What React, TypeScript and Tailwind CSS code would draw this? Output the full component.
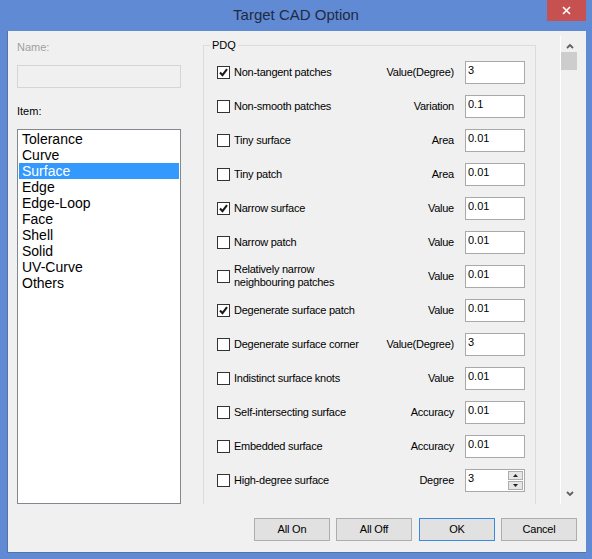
import type { FC } from 'react';

interface Row {
    label: string;
    checked?: boolean;
    unit: string;
    value: string;
    spin?: boolean;
}

const ITEMS = ['Tolerance', 'Curve', 'Surface', 'Edge', 'Edge-Loop', 'Face', 'Shell', 'Solid', 'UV-Curve', 'Others'];

const ROWS: Row[] = [
    { label: 'Non-tangent patches', checked: true, unit: 'Value(Degree)', value: '3' },
    { label: 'Non-smooth patches', unit: 'Variation', value: '0.1' },
    { label: 'Tiny surface', unit: 'Area', value: '0.01' },
    { label: 'Tiny patch', unit: 'Area', value: '0.01' },
    { label: 'Narrow surface', checked: true, unit: 'Value', value: '0.01' },
    { label: 'Narrow patch', unit: 'Value', value: '0.01' },
    { label: 'Relatively narrow\nneighbouring patches', unit: 'Value', value: '0.01' },
    { label: 'Degenerate surface patch', checked: true, unit: 'Value', value: '0.01' },
    { label: 'Degenerate surface corner', unit: 'Value(Degree)', value: '3' },
    { label: 'Indistinct surface knots', unit: 'Value', value: '0.01' },
    { label: 'Self-intersecting surface', unit: 'Accuracy', value: '0.01' },
    { label: 'Embedded surface', unit: 'Accuracy', value: '0.01' },
    { label: 'High-degree surface', unit: 'Degree', value: '3', spin: true },
];

const CheckBox: FC<{ checked?: boolean }> = ({ checked }) => (
    <span className="flex h-[13px] w-[13px] shrink-0 items-center justify-center border border-[#333333] bg-white">
        {checked && (
            <svg width="9" height="9" viewBox="0 0 9 9">
                <path d="M1 4.5 L3.5 7.2 L8 1.2" fill="none" stroke="#1a1a1a" strokeWidth="2.1" />
            </svg>
        )}
    </span>
);

const Button: FC<{ label: string; primary?: boolean }> = ({ label, primary }) => (
    <div
        className={
            'flex h-[23px] w-[76px] items-center justify-center border bg-[#e1e1e1] text-[11px] tracking-[-0.2px] text-black ' +
            (primary ? 'border-[#3c8ae0]' : 'border-[#adadad]')
        }
    >
        {label}
    </div>
);

const OptionRow: FC<{ row: Row }> = ({ row }) => (
    <div className="flex h-[34px] items-center pl-[13px] pr-[10px]">
        <CheckBox checked={row.checked} />
        <span className="ml-[4px] flex-1 whitespace-pre text-[11px] leading-[13px] tracking-[-0.25px]">{row.label}</span>
        <span className="mr-[11px] text-[11px] leading-[13px] tracking-[-0.25px]">{row.unit}</span>
        <div className="relative h-[23px] w-[60px] border border-[#a9a9a9] bg-white px-[2px] pt-px text-[11px] leading-[15px]">
            {row.value}
            {row.spin && (
                <div className="absolute right-[1px] top-[1px] flex flex-col gap-px">
                    <span className="flex h-[9px] w-[15px] items-center justify-center border border-[#adadad] bg-[#e6e6e6]">
                        <svg width="5" height="3" viewBox="0 0 5 3"><path d="M0 3 L2.5 0 L5 3 Z" fill="#222" /></svg>
                    </span>
                    <span className="flex h-[9px] w-[15px] items-center justify-center border border-[#adadad] bg-[#e6e6e6]">
                        <svg width="5" height="3" viewBox="0 0 5 3"><path d="M0 0 L2.5 3 L5 0 Z" fill="#222" /></svg>
                    </span>
                </div>
            )}
        </div>
    </div>
);

export default function App() {
    return (
        <div className="flex h-[559px] w-[592px] flex-col bg-[#618ad4] font-['Liberation_Sans',Arial,sans-serif] text-black">
            <div className="relative flex h-[31px] items-center justify-center">
                <span className="text-[15px] text-[#1f2b40]">Target CAD Option</span>
                <div className="absolute right-[6px] top-0 flex h-[21px] w-[39px] items-center justify-center bg-[#c75050]">
                    <svg width="9" height="9" viewBox="0 0 9 9">
                        <path d="M1 1 L8 8 M8 1 L1 8" stroke="#fff" strokeWidth="1.6" />
                    </svg>
                </div>
            </div>

            <div className="ml-[7px] mr-[6px] flex h-[522px] flex-col border-b border-l border-[#5274ad] bg-[#f0f0f0]">
                <div className="flex h-[473px]">
                    <div className="ml-[9px] flex w-[164px] flex-col">
                        <span className="mt-[10px] text-[11px] leading-[13px] text-[#a0a0a0]">Name:</span>
                        <div className="mt-[11px] h-[23px] border border-[#d5d5d5] bg-[#f0f0f0]" />
                        <span className="mt-[17px] text-[11px] leading-[13px]">Item:</span>
                        <div className="mt-[11px] flex h-[375px] flex-col border border-[#828790] bg-white p-px">
                            {ITEMS.map((item) => (
                                <div
                                    key={item}
                                    className={
                                        'h-[16px] pl-[3px] text-[14px] leading-[16px] ' +
                                        (item === 'Surface' ? 'bg-[#3399ff] text-white' : 'text-black')
                                    }
                                >
                                    {item}
                                </div>
                            ))}
                        </div>
                    </div>

                    <div className="ml-[22px] mt-[5px] h-[468px] w-[333px] overflow-hidden">
                        <div className="relative mt-[9px] border border-[#dcdcdc] pb-[40px] pt-[9px]">
                            <span className="absolute -top-[7px] left-[6px] bg-[#f0f0f0] px-[2px] text-[11px] leading-[13px]">PDQ</span>
                            {ROWS.map((row) => (
                                <OptionRow key={row.label} row={row} />
                            ))}
                        </div>
                    </div>

                    <div className="ml-[24px] mt-[5px] flex h-[468px] w-[18px] flex-col border-l border-white">
                        <div className="flex h-[16px] items-center justify-center pl-[1px] pt-[3px]">
                            <svg width="8" height="6" viewBox="0 0 8 6"><path d="M1 5 L4 2 L7 5" fill="none" stroke="#606060" strokeWidth="1.8" /></svg>
                        </div>
                        <div className="h-[18px] w-[16px] bg-[#cdcdcd]" />
                        <div className="flex-1" />
                        <div className="flex h-[16px] items-center justify-center pb-[4px] pl-[1px]">
                            <svg width="8" height="6" viewBox="0 0 8 6"><path d="M1 1 L4 4 L7 1" fill="none" stroke="#606060" strokeWidth="1.8" /></svg>
                        </div>
                    </div>
                </div>

                <div className="mr-[9px] mt-[14px] flex justify-end">
                    <Button label="All On" />
                    <div className="ml-[6px]"><Button label="All Off" /></div>
                    <div className="ml-[7px]"><Button label="OK" primary /></div>
                    <div className="ml-[6px]"><Button label="Cancel" /></div>
                </div>
            </div>
        </div>
    );
}
